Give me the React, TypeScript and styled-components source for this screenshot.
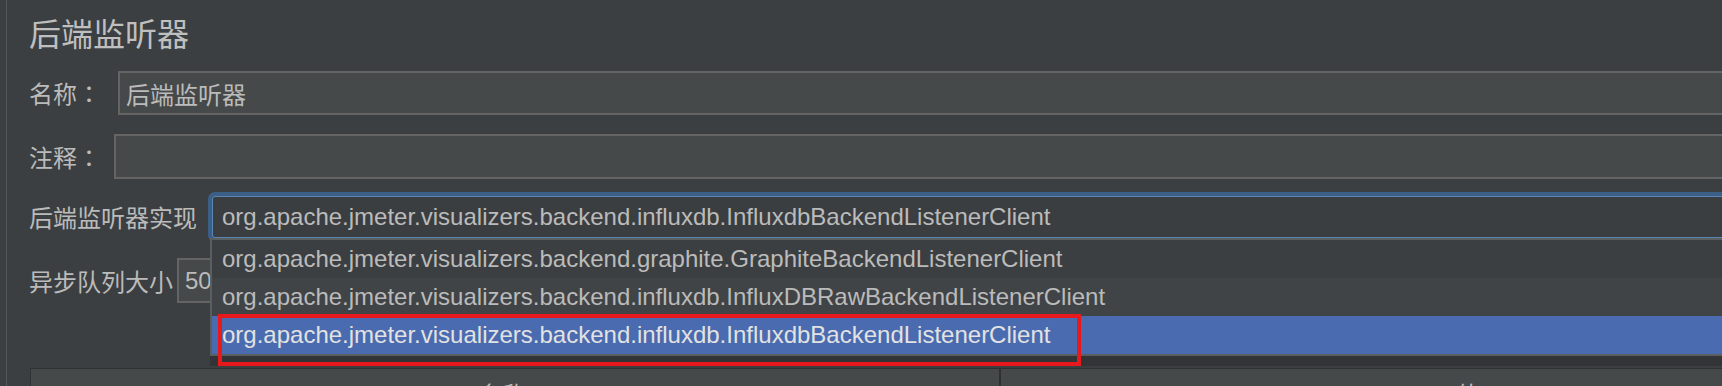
import styled, { createGlobalStyle } from 'styled-components';

const GlobalStyle = createGlobalStyle`
  html, body {
    margin: 0;
    padding: 0;
    background: #3c3f41;
  }
  body {
    font-family: "Liberation Sans", "Noto Sans CJK SC", sans-serif;
    color: #bbbbbb;
  }
`;

const Page = styled.div`
  width: 1722px;
  height: 386px;
  overflow: hidden;
  background: #3c3f41;
  padding-left: 6px;
  box-sizing: border-box;
`;

const Panel = styled.div`
  height: 100%;
  margin-right: -20px;
  border-left: 1px solid #54575a;
  padding-left: 22px;
  display: flex;
  flex-direction: column;
`;

const Title = styled.h1`
  margin: 16px 0 0;
  font-family: "Noto Sans CJK SC", sans-serif;
  font-weight: 400;
  font-size: 32px;
  line-height: 32px;
  color: #bfbfbf;
`;

const Row = styled.div<{ $top: number; $gap: number }>`
  display: flex;
  align-items: center;
  margin-top: ${(p) => p.$top}px;
  gap: ${(p) => p.$gap}px;
`;

const Label = styled.span`
  font-family: "Noto Sans CJK SC", sans-serif;
  font-size: 24px;
  line-height: 24px;
  color: #bbbbbb;
  white-space: nowrap;
`;

// centred full-width colon, as the mac font draws it
const Colon = styled.span`
  font-family: "Noto Sans CJK TC", sans-serif;
`;

const TextField = styled.div<{ $height: number; $width?: number }>`
  ${(p) => (p.$width ? `width: ${p.$width}px;` : 'flex: 1;')}
  height: ${(p) => p.$height}px;
  box-sizing: border-box;
  background: #45494a;
  border: 2px solid #646464;
  padding: 0 6px;
  display: flex;
  align-items: center;
  font-size: 24px;
  color: #bbbbbb;
  white-space: nowrap;
  overflow: hidden;
`;

const Combo = styled.div`
  position: relative;
  flex: 1;
  height: 42px;
  box-sizing: border-box;
  background: #3b3e41;
  border: 1px solid #5b86b4;
  border-radius: 3px;
  box-shadow: 0 0 0 4px #3b5f86;
  padding-left: 9px;
  display: flex;
  align-items: center;
  font-size: 24px;
  color: #bbbbbb;
  white-space: nowrap;
`;

const Popup = styled.ul`
  position: absolute;
  top: calc(100% + 1px);
  left: -3px;
  right: -10px;
  margin: 0;
  padding: 0;
  list-style: none;
  background: #3c3f41;
  border: 2px solid #5b5e61;
  box-shadow: 0 10px 0 rgba(0, 0, 0, 0.16);
  z-index: 2;
`;

const Option = styled.li<{ $tone: 'plain' | 'hover' | 'selected' }>`
  position: relative;
  height: 38px;
  padding-left: 10px;
  display: flex;
  align-items: center;
  font-size: 24px;
  background: ${(p) =>
    p.$tone === 'selected' ? '#4a6baf' : p.$tone === 'hover' ? '#414447' : '#3c3f41'};
  color: ${(p) => (p.$tone === 'selected' ? '#e2e2e2' : '#bbbbbb')};
`;

const Highlight = styled.span`
  position: absolute;
  top: -2px;
  left: 6px;
  width: 863px;
  height: 52px;
  box-sizing: border-box;
  border: 4px solid #e8191d;
  pointer-events: none;
`;

const Table = styled.div`
  margin-top: 65px;
  margin-left: 1px;
  align-self: flex-start;
  width: 1930px;
  height: 40px;
  display: grid;
  grid-template-columns: 970px 1fr;
  background: #45494a;
  border-top: 1px solid #2f3133;
  border-left: 1px solid #2f3133;
`;

const HeaderCell = styled.div`
  border-right: 2px solid #2f3133;
  padding-top: 13px;
  text-align: center;
  font-family: "Noto Sans CJK SC", sans-serif;
  font-size: 24px;
  line-height: 24px;
  color: #bbbbbb;
`;

const options = [
  { text: 'org.apache.jmeter.visualizers.backend.graphite.GraphiteBackendListenerClient', tone: 'plain' as const },
  { text: 'org.apache.jmeter.visualizers.backend.influxdb.InfluxDBRawBackendListenerClient', tone: 'hover' as const },
  { text: 'org.apache.jmeter.visualizers.backend.influxdb.InfluxdbBackendListenerClient', tone: 'selected' as const },
];

export default function App() {
  return (
    <>
      <GlobalStyle />
      <Page>
        <Panel>
          <Title>后端监听器</Title>

          <Row $top={23} $gap={17}>
            <Label>
              名称<Colon>：</Colon>
            </Label>
            <TextField $height={44}>后端监听器</TextField>
          </Row>

          <Row $top={19} $gap={13}>
            <Label>
              注释<Colon>：</Colon>
            </Label>
            <TextField $height={45} />
          </Row>

          <Row $top={17} $gap={15}>
            <Label>后端监听器实现</Label>
            <Combo>
              org.apache.jmeter.visualizers.backend.influxdb.InfluxdbBackendListenerClient
              <Popup>
                {options.map((o) => (
                  <Option key={o.text} $tone={o.tone}>
                    {o.text}
                    {o.tone === 'selected' && <Highlight />}
                  </Option>
                ))}
              </Popup>
            </Combo>
          </Row>

          <Row $top={20} $gap={4}>
            <Label>异步队列大小</Label>
            <TextField $height={45} $width={120}>5000</TextField>
          </Row>

          <Table>
            <HeaderCell>名称：</HeaderCell>
            <HeaderCell>值：</HeaderCell>
          </Table>
        </Panel>
      </Page>
    </>
  );
}
